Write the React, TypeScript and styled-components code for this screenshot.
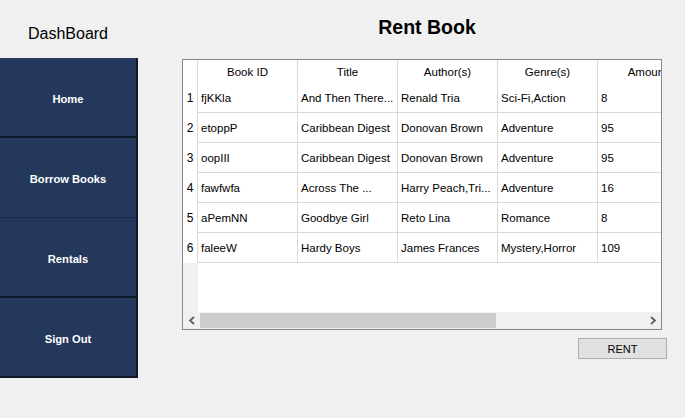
import React from 'react';
import styled, { createGlobalStyle } from 'styled-components';

interface Rental {
  id: string;
  title: string;
  authors: string;
  genres: string;
  amount: string;
}

const rentals: Rental[] = [
  { id: 'fjKKla', title: 'And Then There...', authors: 'Renald Tria', genres: 'Sci-Fi,Action', amount: '8' },
  { id: 'etoppP', title: 'Caribbean Digest', authors: 'Donovan Brown', genres: 'Adventure', amount: '95' },
  { id: 'oopIII', title: 'Caribbean Digest', authors: 'Donovan Brown', genres: 'Adventure', amount: '95' },
  { id: 'fawfwfa', title: 'Across The ...', authors: 'Harry Peach,Tri...', genres: 'Adventure', amount: '16' },
  { id: 'aPemNN', title: 'Goodbye Girl', authors: 'Reto Lina', genres: 'Romance', amount: '8' },
  { id: 'faleeW', title: 'Hardy Boys', authors: 'James Frances', genres: 'Mystery,Horror', amount: '109' },
];

const columns = ['Book ID', 'Title', 'Author(s)', 'Genre(s)', 'Amount'];

const navItems = ['Home', 'Borrow Books', 'Rentals', 'Sign Out'];

const App: React.FC = () => {
  return (
    <>
      <GlobalStyle />
      <Page>
        <Sidebar>
          <Brand>DashBoard</Brand>
          {navItems.map(item => (
            <NavButton key={item} $soft={item === 'Borrow Books'}>{item}</NavButton>
          ))}
        </Sidebar>

        <Main>
          <Title>Rent Book</Title>
          <TableFrame>
            <Viewport>
              <HeaderRow>
                <RowHead />
                {columns.map(col => (
                  <HeaderCell key={col}>{col}</HeaderCell>
                ))}
              </HeaderRow>
              {rentals.map((r, i) => (
                <Row key={r.id}>
                  <RowHead>{i + 1}</RowHead>
                  <Cell>{r.id}</Cell>
                  <Cell>{r.title}</Cell>
                  <Cell>{r.authors}</Cell>
                  <Cell>{r.genres}</Cell>
                  <Cell>{r.amount}</Cell>
                </Row>
              ))}
              <Filler>
                <FillerHead />
              </Filler>
            </Viewport>
            <ScrollBar>
              <ArrowButton>
                <svg width="8" height="9" viewBox="0 0 8 9">
                  <polyline points="6,1 2,4.5 6,8" fill="none" stroke="#606060" strokeWidth="1.8" />
                </svg>
              </ArrowButton>
              <Track>
                <Thumb />
              </Track>
              <ArrowButton>
                <svg width="8" height="9" viewBox="0 0 8 9">
                  <polyline points="2,1 6,4.5 2,8" fill="none" stroke="#606060" strokeWidth="1.8" />
                </svg>
              </ArrowButton>
            </ScrollBar>
          </TableFrame>
          <RentButton>RENT</RentButton>
        </Main>
      </Page>
    </>
  );
};

export default App;

// Styled components

const GlobalStyle = createGlobalStyle`
  html, body {
    margin: 0;
    padding: 0;
    background: #f0f0f0;
  }
  body {
    width: 685px;
    height: 418px;
    overflow: hidden;
    font-family: "Liberation Sans", Arial, sans-serif;
  }
`;

const Page = styled.div`
  display: flex;
  width: 685px;
  height: 418px;
  background: #f0f0f0;
`;

const Sidebar = styled.nav`
  display: flex;
  flex-direction: column;
  width: 138px;
  flex-shrink: 0;
`;

const Brand = styled.div`
  height: 58px;
  box-sizing: border-box;
  padding-top: 24px;
  text-align: center;
  font-size: 16px;
  line-height: 20px;
  color: #000;
  padding-right: 2px;
`;

const NavButton = styled.button<{ $soft?: boolean }>`
  display: flex;
  align-items: center;
  justify-content: center;
  height: 80px;
  width: 138px;
  box-sizing: border-box;
  margin: 0;
  padding: 3px 0 0 0;
  background: #23385b;
  color: #fff;
  border: none;
  border-right: 2px solid #0f1829;
  border-bottom: ${props => (props.$soft ? '1px solid #1a2b47' : '2px solid #0f1829')};
  font-family: "Liberation Sans", Arial, sans-serif;
  font-weight: bold;
  font-size: 11.2px;
  cursor: pointer;
`;

const Main = styled.main`
  display: flex;
  flex-direction: column;
  width: 490px;
  padding-left: 44px;
  padding-top: 16px;
`;

const Title = styled.h1`
  margin: 0;
  font-size: 19.5px;
  line-height: 23px;
  font-weight: bold;
  text-align: center;
  color: #000;
`;

const TableFrame = styled.div`
  display: flex;
  flex-direction: column;
  margin-top: 20px;
  width: 480px;
  height: 271px;
  box-sizing: border-box;
  border: 1px solid #828790;
  background: #fff;
`;

const Viewport = styled.div`
  display: flex;
  flex-direction: column;
  flex: 1;
  overflow: hidden;
`;

const HeaderRow = styled.div`
  display: flex;
  height: 23px;
  flex-shrink: 0;
`;

const Row = styled.div`
  display: flex;
  height: 30px;
  flex-shrink: 0;
`;

const RowHead = styled.div`
  width: 15px;
  flex-shrink: 0;
  box-sizing: border-box;
  border-right: 1px solid #d9d9d9;
  display: flex;
  align-items: center;
  justify-content: center;
  font-size: 12px;
  color: #000;
`;

const HeaderCell = styled.div`
  width: 100px;
  flex-shrink: 0;
  box-sizing: border-box;
  border-right: 1px solid #d9d9d9;
  display: flex;
  align-items: center;
  justify-content: center;
  font-size: 11.5px;
  color: #000;
  white-space: nowrap;
`;

const Cell = styled.div`
  width: 100px;
  flex-shrink: 0;
  box-sizing: border-box;
  border-right: 1px solid #d9d9d9;
  border-bottom: 1px solid #d9d9d9;
  display: flex;
  align-items: center;
  padding-left: 3px;
  font-size: 11.5px;
  color: #000;
  white-space: nowrap;
  overflow: hidden;
`;

const Filler = styled.div`
  flex: 1;
  display: flex;
`;

const FillerHead = styled.div`
  width: 15px;
  background: #f0f0f0;
`;

const ScrollBar = styled.div`
  display: flex;
  height: 17px;
  flex-shrink: 0;
  background: #f0f0f0;
`;

const ArrowButton = styled.div`
  width: 17px;
  display: flex;
  align-items: center;
  justify-content: center;
`;

const Track = styled.div`
  flex: 1;
  display: flex;
  align-items: center;
`;

const Thumb = styled.div`
  width: 296px;
  height: 15px;
  background: #cdcdcd;
`;

const RentButton = styled.button`
  align-self: flex-end;
  margin-top: 8px;
  margin-right: 5px;
  width: 89px;
  height: 21px;
  box-sizing: border-box;
  padding: 0;
  background: #e1e1e1;
  border: 1px solid #adadad;
  font-family: "Liberation Sans", Arial, sans-serif;
  font-size: 11px;
  color: #000;
  cursor: pointer;
`;
